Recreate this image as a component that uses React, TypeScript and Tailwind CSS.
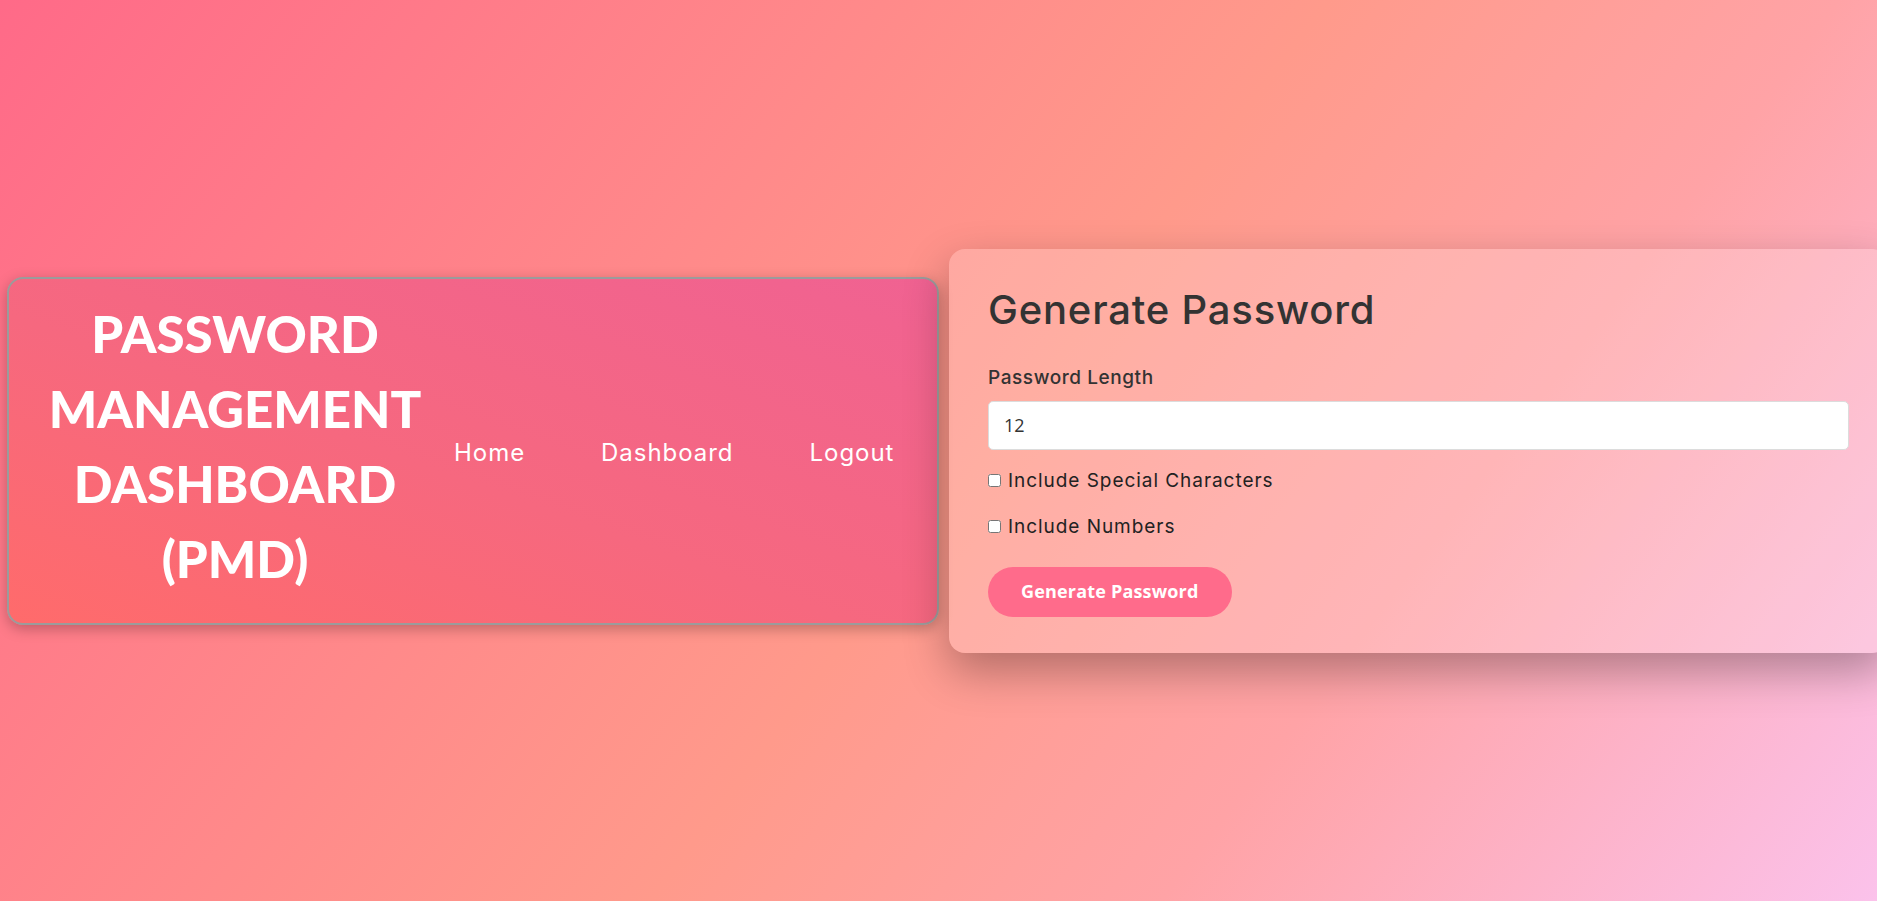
import { useState } from "react";

const poppins = "font-['Inter','Noto_Sans',sans-serif]";

export default function App() {
  const [length, setLength] = useState("12");
  const [special, setSpecial] = useState(false);
  const [numbers, setNumbers] = useState(false);

  return (
    <div className="h-screen w-full overflow-hidden bg-[linear-gradient(127deg,#ff6a88_0%,#ff9a8b_52%,#ffa3a6_72%,#fbc2eb_100%)]">
      <div className="flex h-full items-center pl-[7px]">
        {/* Header / nav card */}
        <header className="flex w-[932px] shrink-0 items-center rounded-2xl border-2 border-[#9b9b9b] bg-[linear-gradient(20deg,#ff6b6b_0%,#f6687f_45%,#f06292_100%)] px-[21px] pt-[17px] pb-[22px] shadow-[0_4px_14px_rgba(0,0,0,0.25)]">
          <h1 className="w-[410px] shrink-0 pb-[5px] text-center font-['Lato',sans-serif] text-[51px] font-black uppercase leading-[75px] text-white">
            Password Management Dashboard (PMD)
          </h1>
          <nav className={`mt-[10px] ml-[14px] flex items-center gap-[76px] ${poppins} text-[24px] tracking-[0.04em] text-white`}>
            <a href="#">Home</a>
            <a href="#">Dashboard</a>
            <a href="#">Logout</a>
          </nav>
        </header>

        {/* Generator card */}
        <main className="ml-[10px] w-[939px] shrink-0 rounded-2xl bg-white/20 px-[39px] pt-[38px] pb-[36px] shadow-[0_18px_45px_rgba(0,0,0,0.3)]">
          <h2 className={`${poppins} text-[40px] font-medium leading-[46px] tracking-[0.02em] text-[#333]`}>
            Generate Password
          </h2>

          <label className={`mt-[31px] block ${poppins} text-[19px] font-medium leading-[27px] tracking-[0.03em] text-[#333]`}>
            Password Length
          </label>
          <input
            type="number"
            value={length}
            onChange={(e) => setLength(e.target.value)}
            className="mt-[10px] block h-[49px] w-full rounded-[5px] border border-[#dcdcdc] bg-white px-[15px] font-['Open_Sans',sans-serif] text-[18px] text-[#333] outline-none"
          />

          <label className={`mt-[17px] flex items-center ${poppins} text-[19px] leading-[27px] tracking-[0.05em] text-[#222]`}>
            <input
              type="checkbox"
              checked={special}
              onChange={() => setSpecial(!special)}
              className="mr-[7px] h-[13px] w-[13px]"
            />
            Include Special Characters
          </label>
          <label className={`mt-[19px] flex items-center ${poppins} text-[19px] leading-[27px] tracking-[0.05em] text-[#222]`}>
            <input
              type="checkbox"
              checked={numbers}
              onChange={() => setNumbers(!numbers)}
              className="mr-[7px] h-[13px] w-[13px]"
            />
            Include Numbers
          </label>

          <button className="mt-[27px] h-[50px] rounded-full bg-[#ff6b8b] px-[33px] font-['Open_Sans',sans-serif] text-[18px] font-bold tracking-[0.01em] text-white">
            Generate Password
          </button>
        </main>
      </div>
    </div>
  );
}
